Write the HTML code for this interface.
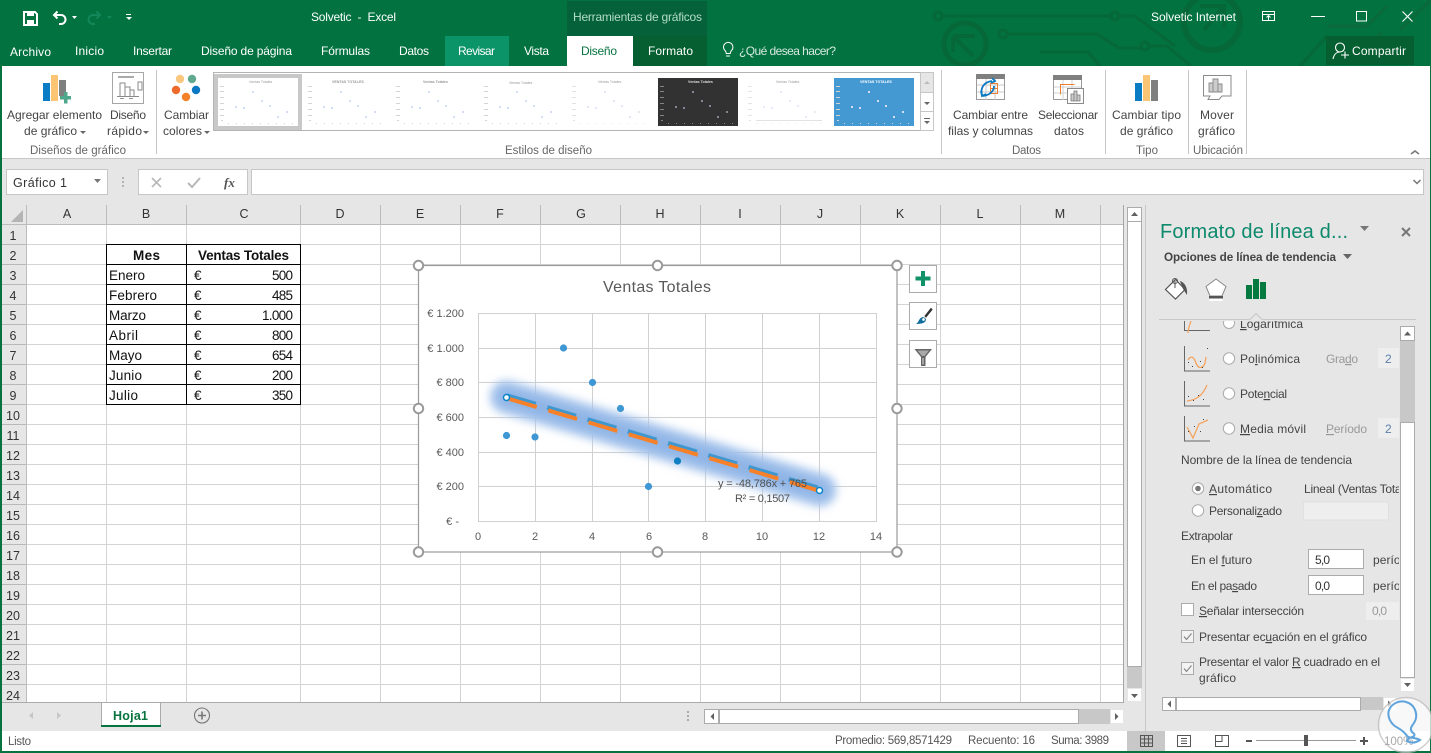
<!DOCTYPE html>
<html><head><meta charset="utf-8"><title>Solvetic - Excel</title>
<style>
html,body{margin:0;padding:0;width:1431px;height:753px;overflow:hidden;background:#fff}
svg{display:block;font-family:"Liberation Sans",sans-serif}
text{white-space:pre}
.w{fill:#fff;font-size:12px}
.r{fill:#444;font-size:12px}
.g{fill:#666;font-size:11.5px}
.h{fill:#333;font-size:12.5px}
.c{fill:#111;font-size:13.5px}
.a{fill:#595959;font-size:11px}
.p{fill:#444;font-size:12px}
.d{fill:#999;font-size:12px}
.s{fill:#555;font-size:11.5px}
.m{fill:#999;font-size:3.6px}
</style></head><body>
<svg width="1431" height="753" viewBox="0 0 1431 753" xmlns="http://www.w3.org/2000/svg">
<defs>
<filter id="gl" x="-20%" y="-80%" width="140%" height="260%"><feGaussianBlur stdDeviation="4.500"/></filter>
<clipPath id="pc"><rect x="1150" y="321" width="249" height="375"/></clipPath>
<clipPath id="tb"><rect x="707" y="0" width="620" height="66"/></clipPath>
<symbol id="th" width="80" height="48" viewBox="0 0 80 48">
<g fill="#d4d4d4"><rect x="2" y="8" width="4" height="1"/><rect x="2" y="13" width="4" height="1"/><rect x="2" y="19" width="4" height="1"/><rect x="2" y="25" width="4" height="1"/><rect x="2" y="31" width="4" height="1"/><rect x="2" y="37" width="4" height="1"/><rect x="3" y="42" width="2" height="1"/>
<rect x="10" y="45" width="1" height="1"/><rect x="18" y="45" width="1" height="1"/><rect x="26" y="45" width="1" height="1"/><rect x="34" y="45" width="1" height="1"/><rect x="42" y="45" width="1" height="1"/><rect x="50" y="45" width="1" height="1"/><rect x="58" y="45" width="1" height="1"/><rect x="66" y="45" width="1" height="1"/><rect x="74" y="45" width="1" height="1"/></g>
<g fill="#d2def3"><rect x="17" y="28" width="2" height="2"/><rect x="25" y="29" width="2" height="2"/><rect x="34" y="13" width="2" height="2"/><rect x="43" y="22" width="2" height="2"/><rect x="51" y="27" width="2" height="2"/><rect x="59" y="38" width="2" height="2"/><rect x="68" y="33" width="2" height="2"/></g>
</symbol>
</defs>

<!-- title bar -->
<rect width="1431" height="66" fill="#027240"/>
<g clip-path="url(#tb)" fill="none" stroke="#066838" stroke-width="3">
<circle cx="938" cy="16" r="4"/><path d="M942 16H1110"/><circle cx="1115" cy="16" r="4"/><path d="M1119 16h16l40 30"/>
<circle cx="965" cy="44" r="21" stroke-width="5"/><path d="M975 36l-22 0v0M953 36l20 20M953 36v16" stroke-width="4"/>
<circle cx="1003" cy="34" r="4"/><path d="M1007 34h90l22 14h22"/><circle cx="1145" cy="46" r="4"/><path d="M1149 46h18l24 20"/><path d="M1040 52h48l12 14" />
<circle cx="1212" cy="22" r="28" stroke-width="6"/><path d="M1200 6h24v22M1224 6l-20 24" stroke-width="4"/>
<path d="M1300 66l36-40h60M1385 66l46-46M1400 30l31-30"/>
</g>
<g fill="none" stroke="#0a6a3b" stroke-width="3"><path d="M1327 26h40l20-20M1400 30l31-30M1352 66l30-34"/></g>
<rect x="567" y="1" width="140" height="35" fill="#05613a"/>
<rect x="567" y="36" width="66" height="30" fill="#fff"/>
<rect x="633" y="36" width="74" height="30" fill="#055f30"/>
<rect x="445" y="36" width="64" height="30" fill="#0a9468"/>
<rect x="1326" y="36" width="88" height="29" fill="#055f30"/>

<!-- QAT -->
<path d="M24 12h11l2 2v11H24z" fill="none" stroke="#fff" stroke-width="2"/><rect x="27" y="12" width="7" height="4" fill="#fff"/><rect x="27" y="20" width="7" height="5" fill="#fff"/>
<path d="M54 15h7a4.500 4.500 0 0 1 0 9h-2M57.500 11.500L54 15l3.500 3.500" fill="none" stroke="#fff" stroke-width="2"/>
<path d="M72 16h5l-2.500 3z" fill="#fff"/>
<path d="M100 15h-7a4.500 4.500 0 0 0 0 9h2M96.500 11.500L100 15l-3.500 3.500" fill="none" stroke="#12875a" stroke-width="2"/>
<path d="M107 16h5l-2.500 3z" fill="#12875a"/>
<rect x="126" y="14" width="5" height="1" fill="#fff"/><path d="M126 17h6l-3 3z" fill="#fff"/>
<text class="w" x="311" y="21" textLength="85">Solvetic  -  Excel</text>
<text x="573" y="21" font-size="12" fill="#b3dcc6" textLength="129">Herramientas de gráficos</text>
<text class="w" x="1151" y="21" textLength="85">Solvetic Internet</text>
<g fill="none" stroke="#fff"><rect x="1262.500" y="11.500" width="12" height="9"/><path d="M1262 14.500h13M1268.500 20v-4M1266.500 17.500l2-2 2 2"/><path d="M1311 16.500h14"/><rect x="1356.500" y="11.500" width="10" height="9.500" stroke-width="1"/><path d="M1402.500 11.500l10 10M1412.500 11.500l-10 10" stroke-width="1.100"/></g>

<!-- tabs -->
<text class="w" x="10" y="56" textLength="41">Archivo</text>
<text class="w" x="75" y="55" textLength="29">Inicio</text>
<text class="w" x="133" y="55" textLength="39">Insertar</text>
<text class="w" x="201" y="55" textLength="91">Diseño de página</text>
<text class="w" x="321" y="55" textLength="49">Fórmulas</text>
<text class="w" x="399" y="55" textLength="30">Datos</text>
<text class="w" x="458" y="55" textLength="37">Revisar</text>
<text class="w" x="524" y="55" textLength="25">Vista</text>
<text x="581" y="55" font-size="12" fill="#07733f" textLength="36">Diseño</text>
<text class="w" x="648" y="55" textLength="45">Formato</text>
<path d="M723.500 49a4.700 4.700 0 1 1 8 3.500c-1 1-1.300 1.500-1.300 3h-3.900c0-1.500-.3-2-1.300-3a4.700 4.700 0 0 1-1.500-3.500zM726 58h4" fill="none" stroke="#fff" transform="translate(0,-2)"/>
<text x="739" y="55" font-size="12" fill="#d6eadf" textLength="97">¿Qué desea hacer?</text>
<circle cx="1340" cy="47.500" r="4.500" fill="none" stroke="#fff" stroke-width="1.100"/><path d="M1333 59c1-5 4-7 7-7M1341 55h8M1345 51.500v7" fill="none" stroke="#fff" stroke-width="1.100"/>
<text class="w" x="1352" y="55" textLength="54">Compartir</text>

<!-- ribbon -->
<rect y="66" width="1431" height="92" fill="#fff"/>
<rect y="158" width="1431" height="1" fill="#c6c6c6"/>
<g fill="#c6c6c6"><rect x="156" y="70" width="1" height="84"/><rect x="941" y="70" width="1" height="84"/><rect x="1105" y="70" width="1" height="84"/><rect x="1188" y="70" width="1" height="84"/><rect x="1246" y="70" width="1" height="84"/></g>

<!-- chart elem icon -->
<rect x="43" y="83" width="7" height="18" fill="#0a7cc4"/><rect x="51" y="75" width="7" height="26" fill="#fcc574"/><rect x="59" y="80" width="7" height="16" fill="#7f7f7f"/>
<path d="M64 92h3.500v4H71v3.500h-3.500v4H64v-4h-4V96h4z" fill="#4ea78a"/>
<text class="r" x="7" y="119" textLength="95">Agregar elemento</text>
<text class="r" x="24" y="135" textLength="53">de gráfico</text><path d="M80 131h6l-3 3z" fill="#666"/>
<!-- quick -->
<rect x="112.500" y="72.500" width="31" height="31" fill="#fff" stroke="#a6a6a6"/><rect x="118" y="76" width="16" height="2" fill="#aaa"/>
<path d="M120 96v-13h5v13M125 96v-9h5v9M130 96v-6h4v6M117 96.500h22" fill="none" stroke="#8a8a8a"/><rect x="138" y="82" width="4" height="8" fill="none" stroke="#8a8a8a"/><rect x="120" y="98" width="4" height="1" fill="#999"/><rect x="129" y="98" width="4" height="1" fill="#999"/>
<text class="r" x="110" y="119" textLength="36">Diseño</text>
<text class="r" x="107" y="135" textLength="35">rápido</text><path d="M143 131h6l-3 3z" fill="#666"/>
<text class="g" x="30" y="154" textLength="96">Diseños de gráfico</text>
<!-- colors -->
<circle cx="180" cy="79" r="4.200" fill="#fac77e"/><circle cx="192" cy="79" r="4.200" fill="#60a98f"/><circle cx="176" cy="90" r="4.200" fill="#ed6c2d"/><circle cx="196" cy="90" r="4.200" fill="#0a78c2"/><circle cx="186" cy="97" r="4.200" fill="#f58228"/>
<text class="r" x="164" y="119" textLength="45">Cambiar</text>
<text class="r" x="163" y="135" textLength="39">colores</text><path d="M204 131h6l-3 3z" fill="#666"/>

<!-- gallery -->
<rect x="213.500" y="72.500" width="707" height="58" fill="#fff" stroke="#b4b4b4"/>
<rect x="214" y="74" width="88" height="56" fill="#c8c8c8"/><rect x="218" y="78" width="80" height="48" fill="#fff"/>
<use href="#th" x="218" y="78"/><text class="m" x="249" y="83">Ventas Totales</text>
<use href="#th" x="306" y="78"/><text class="m" x="332" y="83" font-weight="bold">VENTAS TOTALES</text>
<use href="#th" x="394" y="78"/><text class="m" x="423" y="83" font-weight="bold">Ventas Totales</text>
<use href="#th" x="482" y="78"/><text class="m" x="509" y="84">Ventas Totales</text>
<use href="#th" x="570" y="78" opacity=".65"/><text class="m" x="598" y="83">Ventas Totales</text>
<rect x="658" y="78" width="80" height="48" fill="#323232"/><use href="#th" x="658" y="78" opacity=".5"/><text class="m" x="688" y="83" style="fill:#ddd" font-weight="bold">Ventas Totales</text>
<use href="#th" x="746" y="78" opacity=".6"/><text class="m" x="776" y="83">Ventas Totales</text><rect x="756" y="120" width="66" height="1" fill="#e2e2e2"/>
<rect x="834" y="78" width="80" height="48" fill="#4599d3"/><use href="#th" x="834" y="78"/><text class="m" x="860" y="83" style="fill:#fff" font-weight="bold">VENTAS TOTALES</text>
<rect x="920.500" y="72.500" width="13" height="20" fill="#e6e6e6" stroke="#c6c6c6"/><path d="M924 84h6l-3-3z" fill="#bbb"/>
<rect x="920.500" y="92.500" width="13" height="19" fill="#fff" stroke="#c6c6c6"/><path d="M924 102h6l-3 3z" fill="#666"/>
<rect x="920.500" y="111.500" width="13" height="19" fill="#fff" stroke="#c6c6c6"/><rect x="924" y="118" width="6" height="1" fill="#666"/><path d="M924 121h6l-3 3z" fill="#666"/>
<text class="g" x="505" y="154" textLength="87">Estilos de diseño</text>

<!-- data icons -->
<rect x="976.500" y="74.500" width="28" height="25" fill="#fff" stroke="#9a9a9a"/><rect x="976" y="74" width="29" height="5" fill="#7f7f7f"/>
<path d="M986 79v21M995 79v21M977 85h27M977 92h27" stroke="#c8c8c8" fill="none"/>
<rect x="990.500" y="83.500" width="7" height="5" fill="none" stroke="#ed7d31"/><rect x="990.500" y="88.500" width="7" height="5" fill="none" stroke="#ed7d31"/>
<path d="M982 95c-2-7 2-13 10-14M992 78l3 3-4 2" fill="none" stroke="#0a78c2" stroke-width="1.800"/><path d="M981 91l1 5 4-2M994 86c0 5-4 9-11 10" fill="none" stroke="#0a78c2" stroke-width="1.800"/>
<text class="r" x="953" y="119" textLength="75">Cambiar entre</text>
<text class="r" x="948" y="135" textLength="85">filas y columnas</text>
<rect x="1053.500" y="75.500" width="28" height="24" fill="#fff" stroke="#9a9a9a"/><rect x="1053" y="75" width="29" height="5" fill="#7f7f7f"/>
<path d="M1063 80v20M1072 80v20M1054 87h27M1054 93h27" stroke="#d0d0d0" fill="none"/>
<path d="M1060.500 94.500v-10h14" fill="none" stroke="#ed7d31"/>
<rect x="1067.500" y="88.500" width="16" height="15" fill="#fff" stroke="#8a8a8a"/><path d="M1071 101v-7h3v7zM1074 101v-10h3v10zM1077 101v-6h3v6z" fill="#ccc" stroke="#777" stroke-width=".8"/>
<text class="r" x="1038" y="119" textLength="60">Seleccionar</text>
<text class="r" x="1054" y="135" textLength="30">datos</text>
<rect x="1135" y="83" width="7" height="18" fill="#0a7cc4"/><rect x="1143" y="75" width="7" height="26" fill="#fcc574"/><rect x="1151" y="80" width="7" height="21" fill="#7f7f7f"/>
<text class="r" x="1112" y="119" textLength="69">Cambiar tipo</text>
<text class="r" x="1120" y="135" textLength="53">de gráfico</text>
<text class="g" x="1136" y="154" textLength="22">Tipo</text>
<text class="g" x="1012" y="154" textLength="29">Datos</text>
<path d="M1203.500 75.500h27.500v20.500h-9l-3 3.500h-11l2-3.500h-6.500z" fill="#fff" stroke="#8a8a8a"/><path d="M1209 92V83h4v9zM1213 92V79h5v13zM1218 92v-8h4v8z" fill="#ccc" stroke="#888" stroke-width=".9"/>
<text class="r" x="1200" y="119" textLength="34">Mover</text>
<text class="r" x="1198" y="135" textLength="37">gráfico</text>
<text class="g" x="1193" y="154" textLength="50">Ubicación</text>
<path d="M1411 154l4-3 4 3" fill="none" stroke="#777" stroke-width="1.600"/>

<!-- formula bar -->
<rect y="159" width="1431" height="46" fill="#e6e6e6"/>
<rect x="6.500" y="169.500" width="101" height="25" fill="#fff" stroke="#c6c6c6"/>
<text x="13" y="187" font-size="12.500" fill="#333" textLength="54">Gráfico 1</text><path d="M94 179h7l-3.500 4z" fill="#777"/>
<g fill="#b4b4b4"><rect x="122" y="177" width="2" height="2"/><rect x="122" y="181" width="2" height="2"/><rect x="122" y="185" width="2" height="2"/></g>
<rect x="138.500" y="169.500" width="109" height="25" fill="#fff" stroke="#c6c6c6"/>
<path d="M152 178l9 9M161 178l-9 9" stroke="#b8b8b8" stroke-width="1.600" fill="none"/><path d="M188 183l4 4 8-9" stroke="#b8b8b8" stroke-width="2" fill="none"/>
<text x="224" y="187" font-size="13" font-family="Liberation Serif" font-style="italic" fill="#555" font-weight="bold">fx</text>
<rect x="251.500" y="169.500" width="1172" height="25" fill="#fff" stroke="#c6c6c6"/>
<path d="M1413.500 180l3.500 3.500 3.500-3.500" fill="none" stroke="#777" stroke-width="1.500"/>

<!-- sheet grid -->
<rect x="2" y="205" width="1122" height="20" fill="#e6e6e6"/>
<rect x="2" y="225" width="24" height="478" fill="#e6e6e6"/>
<path d="M11 222l12 0 0-12z" fill="#b4b4b4"/>
<path d="M106.500 225V703M186.500 225V703M300.500 225V703M380.500 225V703M460.500 225V703M540.500 225V703M620.500 225V703M700.500 225V703M780.500 225V703M860.500 225V703M940.500 225V703M1020.500 225V703M1100.500 225V703" stroke="#d4d4d4" fill="none"/>
<path d="M26 244.500H1124M26 264.500H1124M26 284.500H1124M26 304.500H1124M26 324.500H1124M26 344.500H1124M26 364.500H1124M26 384.500H1124M26 404.500H1124M26 424.500H1124M26 444.500H1124M26 464.500H1124M26 484.500H1124M26 504.500H1124M26 524.500H1124M26 544.500H1124M26 564.500H1124M26 584.500H1124M26 604.500H1124M26 624.500H1124M26 644.500H1124M26 664.500H1124M26 684.500H1124" stroke="#d4d4d4" fill="none"/>
<path d="M2 244.500H26M2 264.500H26M2 284.500H26M2 304.500H26M2 324.500H26M2 344.500H26M2 364.500H26M2 384.500H26M2 404.500H26M2 424.500H26M2 444.500H26M2 464.500H26M2 484.500H26M2 504.500H26M2 524.500H26M2 544.500H26M2 564.500H26M2 584.500H26M2 604.500H26M2 624.500H26M2 644.500H26M2 664.500H26M2 684.500H26" stroke="#b8b8b8" fill="none"/>
<path d="M26.500 205V703M106.500 205v20M186.500 205v20M300.500 205v20M380.500 205v20M460.500 205v20M540.500 205v20M620.500 205v20M700.500 205v20M780.500 205v20M860.500 205v20M940.500 205v20M1020.500 205v20M1100.500 205v20" stroke="#bcbcbc" fill="none"/>
<rect x="2" y="224" width="1122" height="1" fill="#bcbcbc"/>
<rect x="1123" y="205" width="1" height="498" fill="#a6a6a6"/>
<g text-anchor="middle">
<text class="h" x="67" y="218">A</text><text class="h" x="146" y="218">B</text><text class="h" x="244" y="218">C</text><text class="h" x="340" y="218">D</text><text class="h" x="420" y="218">E</text><text class="h" x="500" y="218">F</text><text class="h" x="581" y="218">G</text><text class="h" x="660" y="218">H</text><text class="h" x="740" y="218">I</text><text class="h" x="820" y="218">J</text><text class="h" x="900" y="218">K</text><text class="h" x="980" y="218">L</text><text class="h" x="1060" y="218">M</text>
<text class="h" x="13" y="240">1</text><text class="h" x="13" y="260">2</text><text class="h" x="13" y="280">3</text><text class="h" x="13" y="300">4</text><text class="h" x="13" y="320">5</text><text class="h" x="13" y="340">6</text><text class="h" x="13" y="360">7</text><text class="h" x="13" y="380">8</text><text class="h" x="13" y="400">9</text><text class="h" x="13" y="420">10</text><text class="h" x="13" y="440">11</text><text class="h" x="13" y="460">12</text><text class="h" x="13" y="480">13</text><text class="h" x="13" y="500">14</text><text class="h" x="13" y="520">15</text><text class="h" x="13" y="540">16</text><text class="h" x="13" y="560">17</text><text class="h" x="13" y="580">18</text><text class="h" x="13" y="600">19</text><text class="h" x="13" y="620">20</text><text class="h" x="13" y="640">21</text><text class="h" x="13" y="660">22</text><text class="h" x="13" y="680">23</text><text class="h" x="13" y="700">24</text>
</g>
<!-- table -->
<path d="M106.500 244V405M186.500 244V405M300.500 244V405M106 244.500H301M106 264.500H301M106 284.500H301M106 304.500H301M106 324.500H301M106 344.500H301M106 364.500H301M106 384.500H301M106 404.500H301" stroke="#000" fill="none"/>
<text class="c" x="133" y="260" font-weight="bold" textLength="27">Mes</text>
<text class="c" x="198" y="260" font-weight="bold" textLength="91">Ventas Totales</text>
<text class="c" x="109" y="280" textLength="36">Enero</text><text class="c" x="109" y="300" textLength="48">Febrero</text><text class="c" x="109" y="320" textLength="37">Marzo</text><text class="c" x="109" y="340" textLength="29">Abril</text><text class="c" x="109" y="360" textLength="33">Mayo</text><text class="c" x="109" y="380" textLength="33">Junio</text><text class="c" x="109" y="400" textLength="29">Julio</text>
<text class="c" x="194" y="280">€</text><text class="c" x="194" y="300">€</text><text class="c" x="194" y="320">€</text><text class="c" x="194" y="340">€</text><text class="c" x="194" y="360">€</text><text class="c" x="194" y="380">€</text><text class="c" x="194" y="400">€</text>
<text class="c" x="272" y="280" textLength="21">500</text><text class="c" x="272" y="300" textLength="21">485</text><text class="c" x="262" y="320" textLength="31">1.000</text><text class="c" x="272" y="340" textLength="21">800</text><text class="c" x="272" y="360" textLength="21">654</text><text class="c" x="272" y="380" textLength="21">200</text><text class="c" x="272" y="400" textLength="21">350</text>

<!-- chart -->
<rect x="418.500" y="265.500" width="478.500" height="286.500" fill="#fff" stroke="#9a9a9a" stroke-width="1.200"/>
<text x="603" y="292" font-size="16" fill="#595959" textLength="108">Ventas Totales</text>
<path d="M478.500 313V521M535.500 313V521M592.500 313V521M648.500 313V521M705.500 313V521M762.500 313V521M819.500 313V521M876.500 313V521M478 313.500H877M478 348.500H877M478 382.500H877M478 417.500H877M478 452.500H877M478 486.500H877M478 521.500H877" stroke="#d0d0d0" fill="none"/>
<text class="a" x="464" y="317" text-anchor="end">€ 1.200</text><text class="a" x="464" y="352" text-anchor="end">€ 1.000</text><text class="a" x="464" y="386" text-anchor="end">€ 800</text><text class="a" x="464" y="421" text-anchor="end">€ 600</text><text class="a" x="464" y="456" text-anchor="end">€ 400</text><text class="a" x="464" y="490" text-anchor="end">€ 200</text><text class="a" x="459" y="525" text-anchor="end">€ -</text>
<g text-anchor="middle"><text class="a" x="478" y="540">0</text><text class="a" x="535" y="540">2</text><text class="a" x="592" y="540">4</text><text class="a" x="649" y="540">6</text><text class="a" x="705" y="540">8</text><text class="a" x="762" y="540">10</text><text class="a" x="819" y="540">12</text><text class="a" x="876" y="540">14</text></g>
<path d="M506.500 397L820 490" stroke="#a4c3ec" stroke-width="33" stroke-linecap="round" fill="none" filter="url(#gl)"/>
<path d="M506.500 397L820 490" stroke="#7ea9e0" stroke-width="15" stroke-linecap="round" fill="none" filter="url(#gl)" opacity=".6"/>
<g fill="#3f97d4"><circle cx="506.500" cy="435.500" r="3.600"/><circle cx="535" cy="437" r="3.600"/><circle cx="563.500" cy="348" r="3.600"/><circle cx="592.500" cy="382.500" r="3.600"/><circle cx="620.500" cy="408.500" r="3.600"/><circle cx="648.500" cy="486.500" r="3.600"/><circle cx="677.500" cy="461" r="3.600" fill="#0f7fc4"/></g>
<path d="M507 395.500L820.500 488.500" stroke="#3f97cf" stroke-width="4.500" stroke-dasharray="30 12" fill="none"/>
<path d="M508 398.500L820 491" stroke="#f7812a" stroke-width="4" stroke-dasharray="30 12" fill="none"/>
<circle cx="506.500" cy="397.500" r="3" fill="#fff" stroke="#0a84c8" stroke-width="1.500"/><circle cx="819.500" cy="490.500" r="3" fill="#fff" stroke="#0a84c8" stroke-width="1.500"/>
<text class="a" x="718" y="487" textLength="89" style="fill:#505050">y = -48,786x + 765</text>
<text class="a" x="735" y="502" textLength="55" style="fill:#505050">R² = 0,1507</text>
<g fill="#fff" stroke="#9a9a9a" stroke-width="2"><circle cx="418.500" cy="265.500" r="4.700"/><circle cx="657.500" cy="265.500" r="4.700"/><circle cx="897" cy="265.500" r="4.700"/><circle cx="418.500" cy="408.500" r="4.700"/><circle cx="897" cy="408.500" r="4.700"/><circle cx="418.500" cy="552" r="4.700"/><circle cx="657.500" cy="552" r="4.700"/><circle cx="897" cy="552" r="4.700"/></g>
<g fill="#fff" stroke="#ababab"><rect x="909.500" y="265.500" width="27" height="27"/><rect x="909.500" y="302.500" width="27" height="27"/><rect x="909.500" y="340.500" width="27" height="27"/></g>
<path d="M921 271h4v5.500h5.500v4H925v5.500h-4v-5.500h-5.500v-4h5.500z" fill="#0f9268"/>
<path d="M925 316l6-7.500 1 1-6 7.500z" fill="#333" stroke="#333"/><path d="M915 324c4 0 3-6 8-7l3 2c0 4-4 5-11 5z" fill="#0e6d9e"/><circle cx="923.500" cy="319.500" r="1.700" fill="#fff" stroke="#0e6d9e" stroke-width=".7"/>
<path d="M914.500 349h17.500l-6.500 8v9h-4.500v-9z" fill="#666"/><path d="M917.500 350.500h11.500l-4.500 5.500h-2.500z" fill="#aaa"/><path d="M923 358v6.500" stroke="#ddd"/>

<!-- main scrollbars -->
<rect x="1124" y="205" width="21" height="498" fill="#e6e6e6"/>
<rect x="1127" y="207" width="15" height="495" fill="#c8c8c8"/>
<rect x="1127.500" y="207.500" width="14" height="14" fill="#fff" stroke="#ababab"/><path d="M1131 216h7l-3.500-4z" fill="#606060"/>
<rect x="1127.500" y="221.500" width="14" height="445" fill="#fff" stroke="#ababab"/>
<rect x="1127.500" y="688.500" width="14" height="13" fill="#fff" stroke="#e6e6e6"/><path d="M1131 694h7l-3.500 4z" fill="#606060"/>
<rect x="1145" y="205" width="1" height="526" fill="#c6c6c6"/>

<!-- pane -->
<rect x="1146" y="205" width="285" height="526" fill="#e6e6e6"/>
<text x="1160" y="238" font-size="20" fill="#0d8a6c" textLength="188">Formato de línea d...</text>
<path d="M1360 226h9l-4.500 5z" fill="#777"/><path d="M1402 228l8 8M1410 228l-8 8" stroke="#777" stroke-width="2" fill="none"/>
<text x="1164" y="261" font-size="11.700" font-weight="bold" fill="#444" textLength="172">Opciones de línea de tendencia</text>
<path d="M1343 254h9l-4.500 5z" fill="#666"/>
<!-- tabs icons -->
<path d="M1175.500 279.500l9.500 10-9.500 9.500-10-9.500z" fill="#fff" stroke="#555" stroke-width="1.200"/><path d="M1175 288v-7" fill="none" stroke="#555"/><circle cx="1175" cy="281" r="2.500" fill="none" stroke="#555"/><path d="M1180 281c4 1 8 6 7 14-2-3-3-5-4-6z" fill="#555"/>
<path d="M1216 279l10 7.500-4 9.500h-12l-4-9.500z" fill="#fff" stroke="#888"/><rect x="1209" y="296" width="14" height="2.500" fill="#555"/><path d="M1210 298.500h12l1 2.500h-14z" fill="#fff"/>
<g fill="#047a41"><rect x="1246" y="285" width="6" height="14"/><rect x="1253" y="279" width="6" height="20"/><rect x="1260" y="282" width="6" height="17"/></g>
<path d="M1159 319.500h91l6-6 6 6h154" fill="#e6e6e6" stroke="#c8c8c8"/>
<!-- pane clipped -->
<g clip-path="url(#pc)">
<path d="M1184.500 321v9.500h25.500" fill="none" stroke="#666"/><path d="M1188 333c0-4 1-6 3-12" fill="none" stroke="#f4a460" stroke-width="1.300"/>
<circle cx="1229" cy="323" r="5.500" fill="#fff" stroke="#aaa"/>
<text class="p" x="1240" y="328" textLength="63"><tspan text-decoration="underline">L</tspan>ogarítmica</text>
</g>
<path d="M1184.500 346v25h25.500" fill="none" stroke="#666"/><path d="M1188 360c3-5 6-3 8 3s7 6 9 0l1-6" fill="none" stroke="#f4a460" stroke-width="1.300"/><g fill="#444"><rect x="1188" y="362" width="1" height="1"/><rect x="1192" y="366" width="1" height="1"/><rect x="1200" y="361" width="1" height="1"/><rect x="1207" y="348" width="1" height="1"/><rect x="1202" y="367" width="1" height="1"/></g>
<path d="M1184.500 381v25h25.500" fill="none" stroke="#666"/><path d="M1187 401c8-1 15-4 20-16" fill="none" stroke="#f4a460" stroke-width="1.300"/><g fill="#444"><rect x="1188" y="396" width="1" height="1"/><rect x="1193" y="400" width="1" height="1"/><rect x="1198" y="395" width="1" height="1"/><rect x="1203" y="399" width="1" height="1"/></g>
<path d="M1184.500 416v25h25.500" fill="none" stroke="#666"/><path d="M1187 427l6 11 6-14 9-4" fill="none" stroke="#f4a460" stroke-width="1.300"/><g fill="#444"><rect x="1188" y="431" width="1" height="1"/><rect x="1194" y="426" width="1" height="1"/><rect x="1200" y="431" width="1" height="1"/><rect x="1203" y="419" width="1" height="1"/></g>
<g fill="#fff" stroke="#aaa"><circle cx="1229" cy="358.500" r="5.700"/><circle cx="1229" cy="393.500" r="5.700"/><circle cx="1229" cy="428.500" r="5.700"/><circle cx="1198" cy="488.500" r="5.700"/><circle cx="1198" cy="510.500" r="5.700"/></g>
<circle cx="1198" cy="488.500" r="2.800" fill="#777"/>
<text class="p" x="1240" y="363" textLength="60">Po<tspan text-decoration="underline">l</tspan>inómica</text>
<text class="d" x="1326" y="363" textLength="32">Gra<tspan text-decoration="underline">d</tspan>o</text>
<rect x="1378" y="348" width="21" height="20" fill="#eee"/><text x="1385" y="363" font-size="12" fill="#5a7fa8">2</text>
<text class="p" x="1240" y="398" textLength="47">Pote<tspan text-decoration="underline">n</tspan>cial</text>
<text class="p" x="1240" y="433" textLength="66"><tspan text-decoration="underline">M</tspan>edia móvil</text>
<text class="d" x="1326" y="433" textLength="41"><tspan text-decoration="underline">P</tspan>eríodo</text>
<rect x="1378" y="418" width="21" height="20" fill="#eee"/><text x="1385" y="433" font-size="12" fill="#5a7fa8">2</text>
<text class="p" x="1181" y="464" textLength="171">Nombre de la línea de tendencia</text>
<text class="p" x="1209" y="493" textLength="63"><tspan text-decoration="underline">A</tspan>utomático</text>
<g clip-path="url(#pc)"><text class="p" x="1304" y="493" textLength="116">Lineal (Ventas Totales)</text>
<text class="p" x="1373" y="564" textLength="47">períodos</text><text class="p" x="1373" y="590" textLength="47">períodos</text></g>
<text class="p" x="1209" y="515" textLength="73">Personali<tspan text-decoration="underline">z</tspan>ado</text>
<rect x="1303.500" y="502" width="85" height="18" fill="#eee" stroke="#e0e0e0"/>
<text class="p" x="1181" y="540" textLength="52">Extrapolar</text>
<text class="p" x="1191" y="564" textLength="61">En el <tspan text-decoration="underline">f</tspan>uturo</text>
<text class="p" x="1191" y="590" textLength="66">En el pa<tspan text-decoration="underline">s</tspan>ado</text>
<rect x="1308.500" y="549.500" width="55" height="19" fill="#fff" stroke="#ababab"/><text x="1315" y="564" font-size="12" fill="#333" textLength="15">5,0</text>
<rect x="1308.500" y="575.500" width="55" height="19" fill="#fff" stroke="#ababab"/><text x="1315" y="590" font-size="12" fill="#333" textLength="15">0,0</text>
<rect x="1181.500" y="603.500" width="12" height="12" fill="#fff" stroke="#ababab"/>
<text class="p" x="1199" y="615" textLength="105"><tspan text-decoration="underline">S</tspan>eñalar intersección</text>
<rect x="1366" y="602" width="33" height="18" fill="#eee"/><text class="d" x="1372" y="615" textLength="15">0,0</text>
<rect x="1181.500" y="630.500" width="12" height="12" fill="#f3f3f3" stroke="#ababab"/><path d="M1184 636.500l2.500 3 5-6" fill="none" stroke="#888" stroke-width="1.200"/>
<text class="p" x="1199" y="641" textLength="168">Presentar ec<tspan text-decoration="underline">u</tspan>ación en el gráfico</text>
<rect x="1181.500" y="662.500" width="12" height="12" fill="#f3f3f3" stroke="#ababab"/><path d="M1184 668.500l2.500 3 5-6" fill="none" stroke="#888" stroke-width="1.200"/>
<text class="p" x="1199" y="666" textLength="181">Presentar el valor <tspan text-decoration="underline">R</tspan> cuadrado en el</text>
<text class="p" x="1199" y="682" textLength="37">gráfico</text>
<!-- pane scrollbars -->
<rect x="1400" y="327" width="15" height="365" fill="#c8c8c8"/>
<rect x="1400.500" y="326.500" width="14" height="14" fill="#fff" stroke="#ababab"/><path d="M1404 335.500h7l-3.500-4z" fill="#606060"/>
<rect x="1400.500" y="422.500" width="14" height="255" fill="#fff" stroke="#ababab"/>
<rect x="1400.500" y="678.500" width="14" height="13" fill="#fff" stroke="#e6e6e6"/><path d="M1404 683h7l-3.500 4z" fill="#606060"/>
<rect x="1162" y="697" width="234" height="13" fill="#c8c8c8"/>
<rect x="1162.500" y="697.500" width="13" height="13" fill="#fff" stroke="#ababab"/><path d="M1171 700.500v7l-3.500-3.500z" fill="#606060"/>
<rect x="1176.500" y="697.500" width="184" height="13" fill="#fff" stroke="#ababab"/>
<rect x="1383.500" y="697.500" width="13" height="13" fill="#fff" stroke="#e6e6e6"/><path d="M1388 700.500v7l3.500-3.500z" fill="#606060"/>

<!-- sheet tabs -->
<rect x="2" y="702" width="1143" height="29" fill="#e6e6e6"/><rect x="2" y="702" width="1122" height="1" fill="#ababab"/>
<path d="M101.500 703v23M160.500 703v23" stroke="#ababab"/><rect x="102" y="703" width="58" height="22" fill="#fff"/><rect x="101" y="725" width="60" height="2" fill="#07733f"/>
<text x="113" y="720" font-size="12.500" font-weight="bold" fill="#07733f" textLength="35">Hoja1</text>
<path d="M33 712v7l-4-3.500zM57 712v7l4-3.500z" fill="#c6c6c6"/>
<circle cx="202" cy="715.500" r="7.500" fill="none" stroke="#777" stroke-width="1.100"/><path d="M198 715.500h8M202 711.500v8" stroke="#777" stroke-width="1.600"/>
<g fill="#aaa"><rect x="687" y="711" width="2" height="2"/><rect x="687" y="715" width="2" height="2"/><rect x="687" y="719" width="2" height="2"/></g>
<rect x="704" y="709" width="419" height="15" fill="#c8c8c8"/>
<rect x="704.500" y="709.500" width="14" height="14" fill="#fff" stroke="#ababab"/><path d="M714 713v7l-3.500-3.500z" fill="#606060"/>
<rect x="719.500" y="709.500" width="359" height="14" fill="#fff" stroke="#ababab"/>
<rect x="1110.500" y="709.500" width="13" height="14" fill="#fff" stroke="#e6e6e6"/><path d="M1115 713v7l3.500-3.500z" fill="#606060"/>

<!-- status -->
<rect y="731" width="1431" height="21" fill="#fff"/>
<text class="s" x="8" y="745" textLength="23">Listo</text>
<text class="s" x="835" y="744" textLength="117">Promedio: 569,8571429</text>
<text class="s" x="968" y="744" textLength="67">Recuento: 16</text>
<text class="s" x="1051" y="744" textLength="58">Suma: 3989</text>
<rect x="1127" y="731" width="38" height="21" fill="#c8c8c8"/>
<path d="M1140.500 735.500h12v11h-12zM1140.500 739h12M1140.500 743h12M1144.500 735.500v11M1148.500 735.500v11" fill="none" stroke="#555"/>
<rect x="1177.500" y="735.500" width="13" height="11" fill="none" stroke="#555"/><path d="M1181 738.500h6M1181 741h6M1181 743.500h6" stroke="#555"/>
<path d="M1215.500 746.500v-11h13v11zM1222 735.500v6h-6" fill="none" stroke="#555"/>
<rect x="1246" y="740" width="6" height="2" fill="#555"/><rect x="1256" y="740" width="100" height="1" fill="#999"/><rect x="1304" y="735" width="4" height="11" fill="#555"/><path d="M1360 741h8M1364 737v8" stroke="#555" stroke-width="2"/>

<!-- borders -->
<rect x="0" y="66" width="2" height="687" fill="#07733f"/><rect x="1430" y="66" width="1" height="687" fill="#07733f"/><rect y="751" width="1431" height="2" fill="#07733f"/>

<!-- watermark -->
<circle cx="1406" cy="725" r="27.500" fill="#fff" opacity=".72" stroke="#bdbdbd" stroke-width="1.500"/>
<text x="1384" y="745" font-size="11.500" fill="#a8a8a8">100%</text>
<path d="M1398 728C1390 724 1387 716 1389 710C1392 703 1400 700 1406 702C1414 704 1417 712 1416 718C1415 724 1410 726 1411 730C1412 734 1416 733 1414 736C1412 738 1408 737 1407 741C1412 744 1417 742 1420 740C1417 738 1412 738 1408 737C1405 733 1402 730 1398 728Z" fill="none" stroke="#5fa3dc" stroke-width="2"/>
</svg>
</body></html>
